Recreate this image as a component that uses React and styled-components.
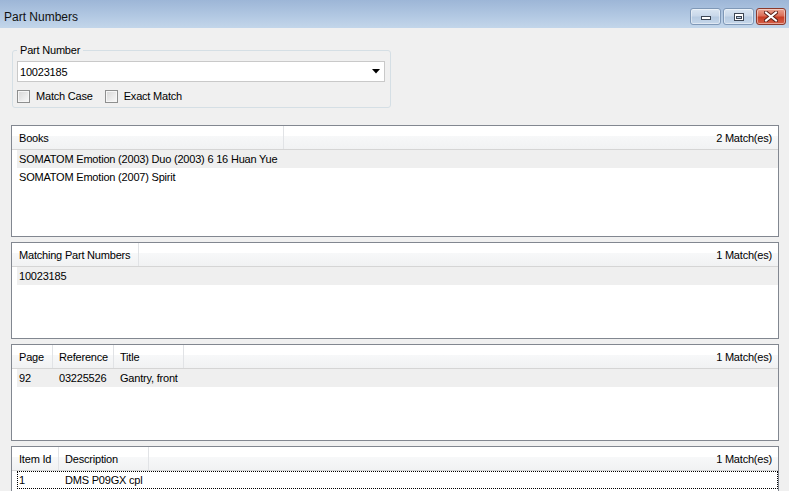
import React from 'react';
import styled, { createGlobalStyle } from 'styled-components';

const GlobalStyle = createGlobalStyle`
  html, body {
    margin: 0;
    padding: 0;
    background: #f0f0f0;
  }
  body {
    font-family: "Liberation Sans", Arial, sans-serif;
    font-size: 11px;
    letter-spacing: -0.2px;
    color: #000;
  }
`;

// Whole dialog window
const Window = styled.div`
  width: 789px;
  height: 491px;
  overflow: hidden;
  display: flex;
  flex-direction: column;
  background: #f0f0f0;
`;

// Caption bar
const TitleBar = styled.div`
  height: 28px;
  flex: none;
  display: flex;
  justify-content: space-between;
  align-items: flex-start;
  background: linear-gradient(to bottom, #9db6d7 0%, #b3c9e3 60%, #c3d6ea 100%);
`;

const Title = styled.div`
  padding: 10px 0 0 4px;
  font-size: 12px;
  line-height: 14px;
  letter-spacing: 0;
  color: #111;
`;

const CaptionButtons = styled.div`
  display: flex;
  gap: 2px;
  margin: 8px 3px 0 0;
`;

const CaptionButton = styled.div`
  width: ${p => p.$w}px;
  height: 17px;
  box-sizing: border-box;
  border-radius: 3px;
  display: flex;
  align-items: center;
  justify-content: center;
  border: 1px solid ${p => (p.$close ? '#8c3a2c' : '#7f98b7')};
  background: ${p =>
    p.$close
      ? 'linear-gradient(to bottom, #eaa493 0%, #dc6f58 45%, #c83d24 55%, #d4604a 100%)'
      : 'linear-gradient(to bottom, #dbe6f2 0%, #c9d8ea 45%, #b7cbe2 55%, #c6d7ea 100%)'};
  box-shadow: inset 0 0 0 1px rgba(255, 255, 255, 0.45);
`;

// Main area below the caption
const Body = styled.div`
  flex: 1;
  min-height: 0;
  display: flex;
  flex-direction: column;
  padding: 0 10px 0 11px;
`;

const GroupBox = styled.fieldset`
  margin: 16px 0 0 1px;
  width: 379px;
  min-width: 0;
  box-sizing: border-box;
  border: 1px solid #d5dfe5;
  border-radius: 3px;
  padding: 5px 5px 4px 4px;
`;

const Legend = styled.legend`
  padding: 0 3px;
  font-size: 11px;
  line-height: 12px;
`;

const Combo = styled.div`
  width: 368px;
  height: 21px;
  box-sizing: border-box;
  border: 1px solid #c9c9c9;
  background: #fff;
  display: flex;
  align-items: center;
  justify-content: space-between;
  padding: 0 4px 0 2px;
`;

const CheckRow = styled.div`
  margin-top: 8px;
  height: 13px;
  display: flex;
  align-items: center;
  gap: 12px;
`;

const CheckItem = styled.label`
  display: flex;
  align-items: center;
  gap: 6px;
  line-height: 13px;
`;

const CheckBox = styled.span`
  width: 13px;
  height: 13px;
  box-sizing: border-box;
  border: 1px solid #8e8f8f;
  background: linear-gradient(135deg, #d6d6d6 0%, #ececec 60%, #fafafa 100%);
  box-shadow: inset 0 0 0 1px #f6f6f6;
`;

const PanelStack = styled.div`
  margin-top: 17px;
  display: flex;
  flex-direction: column;
  gap: 5px;
`;

const Panel = styled.div`
  height: ${p => p.$h}px;
  flex: none;
  box-sizing: border-box;
  border: 1px solid #828790;
  background: #fff;
  display: flex;
  flex-direction: column;
  overflow: hidden;
`;

const Header = styled.div`
  height: 24px;
  flex: none;
  box-sizing: border-box;
  display: flex;
  border-bottom: 1px solid #d5d5d5;
  background: linear-gradient(to bottom, #ffffff 0%, #ffffff 42%, #f7f8f9 43%, #f1f2f3 100%);
`;

const HeaderCell = styled.div`
  width: ${p => p.$w}px;
  flex: none;
  box-sizing: border-box;
  border-right: 1px solid #e1e3e6;
  padding: 2px 0 0 ${p => (p.$first ? 7 : 6)}px;
  line-height: 21px;
  white-space: nowrap;
`;

const HeaderCount = styled.div`
  flex: 1;
  text-align: right;
  padding: 2px 6px 0 0;
  line-height: 21px;
  white-space: nowrap;
`;

const Rows = styled.div`
  padding-left: 5px;
`;

const Row = styled.div`
  height: 18px;
  display: flex;
  line-height: 19px;
  background: ${p => (p.$selected ? '#efefef' : 'transparent')};
  outline: ${p => (p.$focused ? '1px dotted #000' : 'none')};
  outline-offset: -1px;
`;

const Cell = styled.div`
  width: ${p => p.$w}px;
  flex: none;
  box-sizing: border-box;
  padding-left: ${p => (p.$first ? 2 : 6)}px;
  white-space: nowrap;
`;

const panels = [
  {
    h: 112,
    cols: [{ label: 'Books', w: 272 }],
    count: '2 Match(es)',
    rows: [['SOMATOM Emotion (2003) Duo (2003) 6 16 Huan Yue'], ['SOMATOM Emotion (2007) Spirit']],
    selected: 0,
  },
  {
    h: 97,
    cols: [{ label: 'Matching Part Numbers', w: 127 }],
    count: '1 Match(es)',
    rows: [['10023185']],
    selected: 0,
  },
  {
    h: 97,
    cols: [
      { label: 'Page', w: 41 },
      { label: 'Reference', w: 61 },
      { label: 'Title', w: 70 },
    ],
    count: '1 Match(es)',
    rows: [['92', '03225526', 'Gantry, front']],
    selected: 0,
  },
  {
    h: 90,
    cols: [
      { label: 'Item Id', w: 47 },
      { label: 'Description', w: 90 },
    ],
    count: '1 Match(es)',
    rows: [['1', 'DMS P09GX cpl']],
    focused: 0,
  },
];

const MinGlyph = () => (
  <svg width="12" height="8" viewBox="0 0 12 8">
    <rect x="1.5" y="3.5" width="9" height="3" fill="#fff" stroke="#3d4654" />
  </svg>
);

const MaxGlyph = () => (
  <svg width="12" height="10" viewBox="0 0 12 10">
    <rect x="1.5" y="1.5" width="9" height="7" fill="#fff" stroke="#3d4654" />
    <rect x="3.5" y="4.5" width="5" height="2" fill="#b8cbe2" stroke="#3d4654" />
  </svg>
);

const CloseGlyph = () => (
  <svg width="14" height="11" viewBox="0 0 14 11">
    <path d="M2 1.5 L12 9.5 M12 1.5 L2 9.5" stroke="#5a2018" strokeWidth="4" strokeLinecap="square" />
    <path d="M2 1.5 L12 9.5 M12 1.5 L2 9.5" stroke="#fff" strokeWidth="2" strokeLinecap="square" />
  </svg>
);

const ComboArrow = () => (
  <svg width="8" height="5" viewBox="0 0 8 5">
    <path d="M0 0 H8 L4 4.5 Z" fill="#000" />
  </svg>
);

const ResultPanel = ({ panel }) => (
  <Panel $h={panel.h}>
    <Header>
      {panel.cols.map((c, i) => (
        <HeaderCell key={c.label} $w={c.w} $first={i === 0}>
          {c.label}
        </HeaderCell>
      ))}
      <HeaderCount>{panel.count}</HeaderCount>
    </Header>
    <Rows>
      {panel.rows.map((r, ri) => (
        <Row key={ri} $selected={panel.selected === ri} $focused={panel.focused === ri}>
          {r.map((v, ci) => (
            <Cell key={ci} $first={ci === 0} $w={ci === 0 ? panel.cols[ci].w - 5 : panel.cols[ci].w}>
              {v}
            </Cell>
          ))}
        </Row>
      ))}
    </Rows>
  </Panel>
);

const App = () => {
  return (
    <Window>
      <GlobalStyle />
      <TitleBar>
        <Title>Part Numbers</Title>
        <CaptionButtons>
          <CaptionButton $w={31}>
            <MinGlyph />
          </CaptionButton>
          <CaptionButton $w={31}>
            <MaxGlyph />
          </CaptionButton>
          <CaptionButton $w={30} $close>
            <CloseGlyph />
          </CaptionButton>
        </CaptionButtons>
      </TitleBar>
      <Body>
        <GroupBox>
          <Legend>Part Number</Legend>
          <Combo>
            <span>10023185</span>
            <ComboArrow />
          </Combo>
          <CheckRow>
            <CheckItem>
              <CheckBox />
              Match Case
            </CheckItem>
            <CheckItem>
              <CheckBox />
              Exact Match
            </CheckItem>
          </CheckRow>
        </GroupBox>
        <PanelStack>
          {panels.map((p, i) => (
            <ResultPanel key={i} panel={p} />
          ))}
        </PanelStack>
      </Body>
    </Window>
  );
};

export default App;
